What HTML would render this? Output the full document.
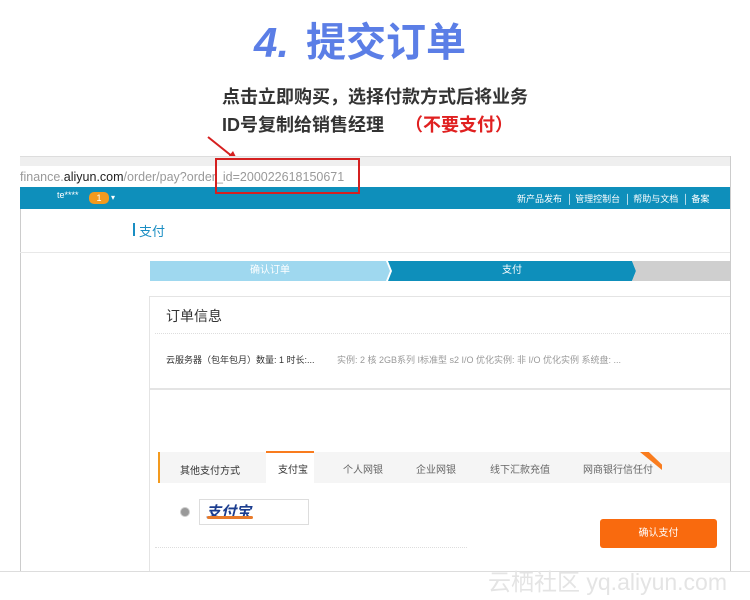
<!DOCTYPE html><html><head><meta charset="utf-8"><style>
body{margin:0;width:750px;height:600px;background:#fff;position:relative;overflow:hidden;font-family:"Liberation Sans","Noto Sans CJK SC",sans-serif}
.a{position:absolute}
</style></head><body>
<div class="a" style="left:254px;top:17px;font-size:42px;font-weight:bold;color:#5b7ee6;font-style:italic;line-height:52px">4.</div>
<div class="a" style="left:306px;top:17px;font-size:40px;font-weight:bold;color:#5b7ee6;line-height:52px">提交订单</div>
<div class="a" style="left:222px;top:83px;font-size:18px;font-weight:bold;color:#333">点击立即购买，选择付款方式后将业务</div>
<div class="a" style="left:222px;top:111px;font-size:18px;font-weight:bold;color:#333">ID号复制给销售经理</div>
<div class="a" style="left:405px;top:111px;font-size:18px;font-weight:bold;color:#e02020">（不要支付）</div>
<svg class="a" style="left:0;top:0" width="750" height="600">
<line x1="208" y1="137" x2="233" y2="157" stroke="#d62020" stroke-width="2"/>
<polygon points="238,161 228,157 233,151" fill="#d62020"/>
</svg>
<div class="a" style="left:20px;top:156px;width:709px;height:415px;border:1px solid #ccc;border-top:none;background:#fff"></div>
<div class="a" style="left:20px;top:156px;width:710px;height:9px;background:#efefef;border-top:1px solid #ddd"></div>
<div class="a" style="left:20px;top:166px;width:710px;height:21px;background:#fff;font-size:12.5px;line-height:22px;color:#999;white-space:nowrap">finance.<span style="color:#222">aliyun.com</span>/order/pay?order_id=200022618150671</div>
<div class="a" style="left:20px;top:187px;width:710px;height:22px;background:#0e8fbb"></div>
<div class="a" style="left:57px;top:190px;font-size:9px;color:#fff">te****</div>
<div class="a" style="left:89px;top:192px;width:20px;height:12px;border-radius:5px;background:#f39a1e;color:#fff;font-size:9px;text-align:center;line-height:12px">1</div>
<div class="a" style="left:111px;top:193px;font-size:8px;color:#fff">▾</div>
<div class="a" style="left:517px;top:192px;font-size:9px;color:#fff;white-space:nowrap">新产品发布 &nbsp;│ 管理控制台 &nbsp;│ 帮助与文档 &nbsp;│ 备案</div>
<div class="a" style="left:20px;top:209px;width:710px;height:43px;border-bottom:1px solid #e8e8e8"></div>
<div class="a" style="left:133px;top:223px;width:2px;height:13px;background:#1a8ec3"></div>
<div class="a" style="left:139px;top:221px;font-size:13px;color:#1a8ec3">支付</div>
<div class="a" style="left:150px;top:261px;width:240px;height:20px;background:#9fd8ef;color:#fff;font-size:10px;line-height:20px;text-align:center;clip-path:polygon(0 0,236px 0,100% 50%,236px 100%,0 100%)">确认订单</div>
<div class="a" style="left:388px;top:261px;width:248px;height:20px;background:#0e8fbb;color:#fff;font-size:10px;line-height:20px;text-align:center;clip-path:polygon(0 0,244px 0,100% 50%,244px 100%,0 100%,4px 50%)">支付</div>
<div class="a" style="left:632px;top:261px;width:98px;height:20px;background:#cfcfcf;clip-path:polygon(0 0,100% 0,100% 100%,0 100%,4px 50%)"></div>
<div class="a" style="left:149px;top:296px;width:580px;height:275px;border:1px solid #e4e4e4;border-right:none;border-bottom:none"></div>
<div class="a" style="left:166px;top:306px;font-size:14px;color:#333">订单信息</div>
<div class="a" style="left:155px;top:333px;width:575px;border-top:1px dotted #ddd"></div>
<div class="a" style="left:166px;top:353px;font-size:9px;color:#333;white-space:nowrap">云服务器（包年包月）数量: 1 时长:...</div>
<div class="a" style="left:337px;top:353px;font-size:9px;color:#999;white-space:nowrap">实例: 2 核 2GB系列 I标准型 s2 I/O 优化实例: 非 I/O 优化实例 系统盘: ...</div>
<div class="a" style="left:149px;top:388px;width:581px;border-top:2px solid #e4e4e4"></div>
<div class="a" style="left:158px;top:452px;width:572px;height:31px;background:#f5f5f5"></div>
<div class="a" style="left:158px;top:452px;width:2px;height:31px;background:#f39a1e"></div>
<div class="a" style="left:180px;top:462px;font-size:10px;color:#333">其他支付方式</div>
<div class="a" style="left:266px;top:451px;width:48px;height:32px;background:#fff;border-top:2px solid #f97c1e"></div>
<div class="a" style="left:278px;top:461px;font-size:10px;color:#333">支付宝</div>
<div class="a" style="left:343px;top:461px;font-size:10px;color:#666">个人网银</div>
<div class="a" style="left:416px;top:461px;font-size:10px;color:#666">企业网银</div>
<div class="a" style="left:490px;top:461px;font-size:10px;color:#666">线下汇款充值</div>
<div class="a" style="left:583px;top:461px;font-size:10px;color:#666">网商银行信任付</div>
<div class="a" style="left:640px;top:452px;width:22px;height:18px;background:#f97c1e;clip-path:polygon(0 0,40% 0,100% 70%,100% 100%)"></div>
<div class="a" style="left:180px;top:507px;width:8px;height:8px;border-radius:50%;background:#999;border:1px solid #ccc"></div>
<div class="a" style="left:199px;top:499px;width:108px;height:24px;border:1px solid #ddd;background:#fff"></div>
<div class="a" style="left:206px;top:501px;font-size:15px;font-weight:bold;color:#1b3d8f;font-style:italic">支付宝</div>
<div class="a" style="left:207px;top:516px;width:46px;height:3px;border-radius:3px;background:#e87a2a"></div>
<div class="a" style="left:155px;top:547px;width:312px;border-top:1px dotted #ddd"></div>
<div class="a" style="left:600px;top:519px;width:117px;height:29px;border-radius:3px;background:#f96a0e;color:#fff;font-size:10px;line-height:29px;text-align:center">确认支付</div>
<div class="a" style="left:0;top:571px;width:750px;border-top:1px solid #ddd"></div>
<div class="a" style="left:488px;top:563px;font-size:23px;color:#e4e4e4;white-space:nowrap">云栖社区 yq.aliyun.com</div>
<div class="a" style="left:215px;top:158px;width:141px;height:32px;border:2.5px solid #d42020"></div>
</body></html>
